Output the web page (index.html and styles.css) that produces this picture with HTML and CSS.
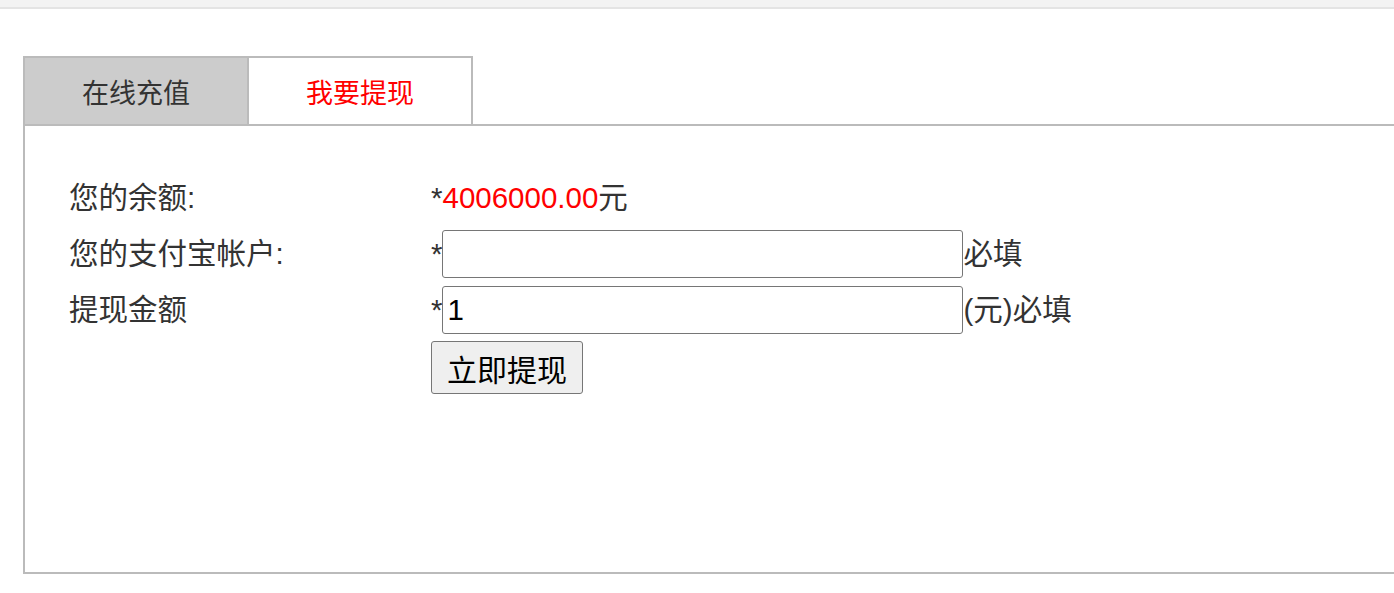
FILE: index.html
```html
<!DOCTYPE html>
<html lang="zh-CN">
<head>
<meta charset="utf-8">
<title>我要提现</title>
<link rel="stylesheet" href="styles.css">
</head>
<body>
<div class="topbar"></div>
<div class="panel">
  <ul class="tabs">
    <li class="tab">在线充值</li>
    <li class="tab active">我要提现</li>
  </ul>
  <div class="content">
    <div class="form">
      <div class="label">您的余额:</div>
      <div class="value">*<span class="money">4006000.00</span>元</div>
      <div class="label">您的支付宝帐户:</div>
      <div class="value">*<input class="field" type="text" value="">必填</div>
      <div class="label">提现金额</div>
      <div class="value">*<input class="field" type="text" value="1">(元)必填</div>
      <div class="label"></div>
      <div class="value btnrow"><button class="btn" type="button">立即提现</button></div>
    </div>
  </div>
</div>
</body>
</html>
```

FILE: styles.css
```css
html, body {
  margin: 0;
  padding: 0;
  background: #fff;
  font-family: "Liberation Sans", "Noto Sans CJK SC", sans-serif;
  color: #333;
}
.topbar {
  height: 7px;
  background: #f3f3f3;
  border-bottom: 2px solid #e4e4e4;
}
.panel {
  margin: 47px 0 0 23px;
  width: 1420px;
}
.tabs {
  list-style: none;
  margin: 0;
  padding: 0;
  display: flex;
  border-left: 2px solid #bbb;
  width: max-content;
}
.tab {
  width: 222px;
  height: 66px;
  border-top: 2px solid #bbb;
  border-right: 2px solid #bbb;
  background: #ccc;
  display: flex;
  align-items: center;
  justify-content: center;
  font-size: 27px;
  color: #333;
}
.tab.active {
  background: #fff;
  color: #f00;
}
.content {
  border: 2px solid #bbb;
  box-sizing: border-box;
  height: 450px;
  padding: 44px 0 0 44px;
}
.form {
  display: grid;
  grid-template-columns: 362px auto;
  grid-auto-rows: 56px;
  font-size: 29.5px;
  align-items: center;
}
.label, .value {
  display: flex;
  align-items: center;
  height: 56px;
  line-height: 1;
}
.money {
  color: #f00;
}
.field {
  box-sizing: border-box;
  width: 521px;
  height: 48px;
  margin: 0;
  padding: 0 4px;
  border: 1px solid #767676;
  border-radius: 3px;
  font-family: "Liberation Sans", "Noto Sans CJK SC", sans-serif;
  font-size: 29.5px;
  color: #000;
  background: #fff;
}
.btnrow {
  align-items: flex-start;
  padding-top: 3px;
  box-sizing: border-box;
}
.btn {
  box-sizing: border-box;
  width: 152px;
  height: 53px;
  margin: 0;
  padding: 0;
  border: 1px solid #767676;
  border-radius: 3px;
  background: #efefef;
  font-family: "Liberation Sans", "Noto Sans CJK SC", sans-serif;
  font-size: 30px;
  color: #000;
}
```
